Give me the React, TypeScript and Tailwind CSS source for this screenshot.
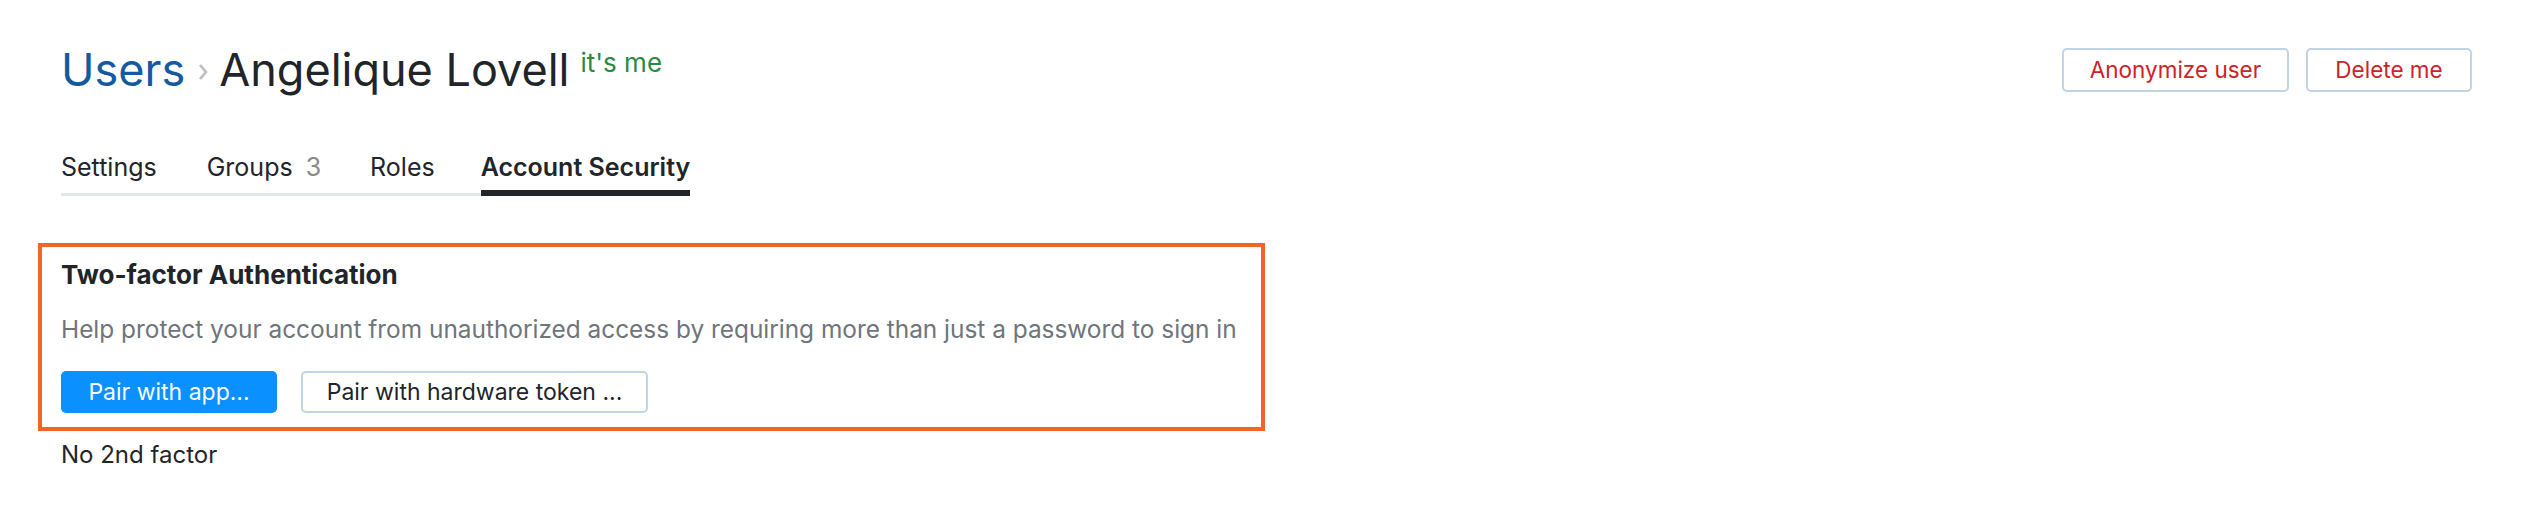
import React from "react";

export default function App() {
  const font = { fontFamily: "Inter, 'Noto Sans', sans-serif" };
  return (
    <div className="min-h-[522px] bg-white pl-[61px] pr-[59px] pt-[44px] text-[#212529]" style={font}>
      <div className="flex items-start justify-between">
        <div className="flex items-start">
          <h1 className="flex items-center text-[45px] leading-[52px] font-normal">
            <span className="text-[#15599f]">Users</span>
            <svg className="ml-[13px] mr-[11px] mt-[4px]" width="10" height="18" viewBox="0 0 10 18">
              <polyline points="2,2 8,9 2,16" fill="none" stroke="#bdbdbd" strokeWidth="2.6" />
            </svg>
            <span className="text-[#212529]">Angelique Lovell</span>
          </h1>
          <span className="ml-[11px] mt-[4px] text-[26px] leading-[30px] text-[#2a8a3f]">it's me</span>
        </div>
        <div className="mt-[4px] flex gap-[17px]">
          <button className="h-[44px] w-[227px] rounded-[5px] border-2 border-[#c0d4e6] bg-white text-[22.5px] text-[#cc2229]">
            Anonymize user
          </button>
          <button className="h-[44px] w-[166px] rounded-[5px] border-2 border-[#c0d4e6] bg-white text-[22.5px] text-[#cc2229]">
            Delete me
          </button>
        </div>
      </div>

      <div className="mt-[53px] inline-flex border-b-[3px] border-[#e4e7eb]">
        <div className="-mb-[3px] mr-[50px] border-b-[6px] border-transparent pb-[5px] text-[25px] leading-[36px]">Settings</div>
        <div className="-mb-[3px] mr-[49px] border-b-[6px] border-transparent pb-[5px] text-[25px] leading-[36px]">
          Groups<span className="ml-[13px] text-[#8a8a8a]">3</span>
        </div>
        <div className="-mb-[3px] mr-[46px] border-b-[6px] border-transparent pb-[5px] text-[25px] leading-[36px]">Roles</div>
        <div className="-mb-[3px] border-b-[6px] border-[#212529] pb-[5px] text-[25px] leading-[36px] font-semibold">
          Account Security
        </div>
      </div>

      <div className="-ml-[23px] mt-[47px] w-[1227px] border-4 border-[#f26524] pb-[14px] pl-[19px] pt-[12px]">
        <h2 className="text-[26px] leading-[32px] font-bold">Two-factor Authentication</h2>
        <p className="mt-[22px] text-[24.4px] leading-[32px] text-[#6e757c]">
          Help protect your account from unauthorized access by requiring more than just a password to sign in
        </p>
        <div className="mt-[26px] flex gap-[24px]">
          <button className="h-[42px] w-[216px] rounded-[5px] bg-[#0a90ff] text-[23px] text-white">Pair with app...</button>
          <button className="h-[42px] w-[347px] rounded-[5px] border-2 border-[#c0d4e6] bg-white text-[23px] text-[#212529]">
            Pair with hardware token ...
          </button>
        </div>
      </div>

      <div className="mt-[8px] text-[24px] leading-[32px] text-[#212529]">No 2nd factor</div>
    </div>
  );
}
